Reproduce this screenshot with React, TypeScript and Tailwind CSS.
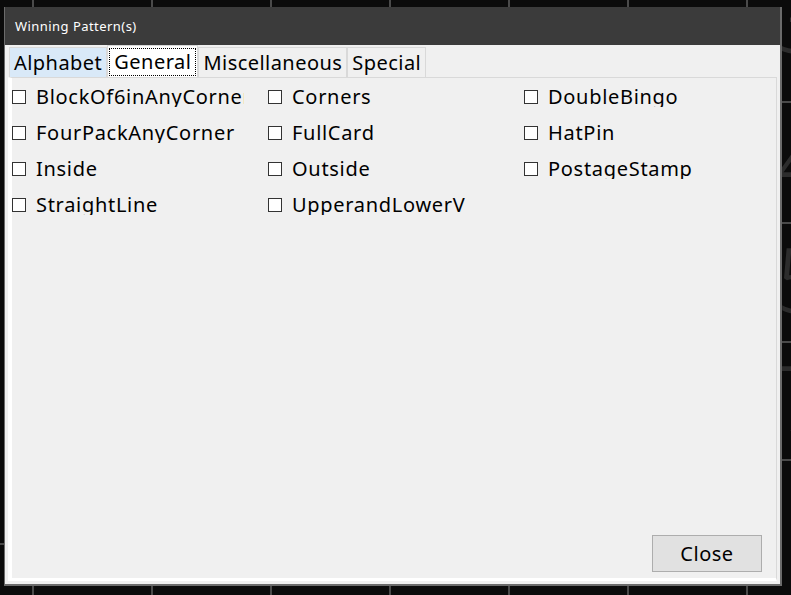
import React from 'react';

const columns: string[][] = [
    ['BlockOf6inAnyCorner', 'FourPackAnyCorner', 'Inside', 'StraightLine'],
    ['Corners', 'FullCard', 'Outside', 'UpperandLowerV'],
    ['DoubleBingo', 'HatPin', 'PostageStamp'],
];

const tabs = ['Alphabet', 'General', 'Miscellaneous', 'Special'];

const vLines = [32, 151, 270, 389, 508, 627, 746];
const hLinesRight = [101, 222, 341, 459];
const digits = [
    { d: '3', y: -22 },
    { d: '4', y: 118 },
    { d: '5', y: 238 },
    { d: '7', y: 356 },
];

function Pattern({ label }: { label: string }) {
    return (
        <label className="flex items-center h-[36px] w-[256px] overflow-hidden whitespace-nowrap">
            <span className="w-[14px] h-[14px] border border-[#333] bg-white shrink-0" />
            <span className="ml-[10px] text-[20px] tracking-[0.7px] text-black leading-none w-[208px] overflow-hidden">
                {label}
            </span>
        </label>
    );
}

export default function App() {
    return (
        <div
            className="relative w-[791px] h-[595px] bg-[#0b0b0b] overflow-hidden"
            style={{ fontFamily: '"Noto Sans", "Open Sans", sans-serif' }}
        >
            {/* board behind the dialog */}
            {vLines.map((x) => (
                <div key={x} className="absolute top-0 bottom-0 w-[2px] bg-[#4a4a4a]" style={{ left: x }} />
            ))}
            {hLinesRight.map((y) => (
                <div key={y} className="absolute left-[700px] right-0 h-[2px] bg-[#4a4a4a]" style={{ top: y }} />
            ))}
            <div className="absolute left-0 w-[40px] h-[2px] bg-[#4a4a4a] top-[543px]" />
            {digits.map(({ d, y }) => (
                <div
                    key={d}
                    className="absolute left-[776px] h-[80px] text-[90px] leading-[80px] text-[#2c2c2c] font-light"
                    style={{ top: y }}
                >
                    {d}
                </div>
            ))}

            {/* dialog window */}
            <div className="absolute left-[4px] top-[7px] w-[778px] h-[579px] flex flex-col bg-[#f0f0f0] border-r-2 border-b-2 border-l border-[#6b6b6b]">
                <div className="h-[38px] bg-[#3b3b3b] flex items-center pl-[10px] pt-[2px] text-[13px] tracking-[0.45px] text-white shrink-0">
                    Winning Pattern(s)
                </div>
                <div className="flex-1 flex flex-col px-[3px] pb-[3px] bg-[#f0f0f0]">
                    <div className="flex items-end h-[32px] pl-[1px]">
                        {tabs.map((t) =>
                            t === 'General' ? (
                                <div
                                    key={t}
                                    className="h-[32px] px-[1px] pt-[2px] pb-[1px] bg-white border border-b-0 border-[#d9d9d9] flex"
                                >
                                    <span className="flex-1 px-[4px] border border-dotted border-black text-[20px] tracking-[0.5px] leading-[26px] text-black">
                                        {t}
                                    </span>
                                </div>
                            ) : (
                                <div
                                    key={t}
                                    className={`h-[30px] px-[4px] border border-b-0 border-[#d9d9d9] text-[20px] tracking-[0.45px] leading-[30px] text-black ${
                                        t === 'Alphabet' ? 'bg-[#d9e9f8]' : 'bg-[#f0f0f0]'
                                    }`}
                                >
                                    {t}
                                </div>
                            )
                        )}
                    </div>
                    <div className="flex-1 flex flex-col border border-[#d9d9d9] border-l-white border-b-white border-l-4 border-b-[3px] bg-[#f0f0f0] pt-[1px]">
                        <div className="flex">
                            {columns.map((col, i) => (
                                <div key={i} className="flex flex-col">
                                    {col.map((p) => (
                                        <Pattern key={p} label={p} />
                                    ))}
                                </div>
                            ))}
                        </div>
                        <div className="flex-1" />
                        <div className="flex justify-end pr-[14px] pb-[6px]">
                            <button className="w-[110px] h-[37px] bg-[#e1e1e1] border border-[#adadad] text-[20px] tracking-[0.5px] text-black">
                                Close
                            </button>
                        </div>
                    </div>
                </div>
            </div>
        </div>
    );
}
